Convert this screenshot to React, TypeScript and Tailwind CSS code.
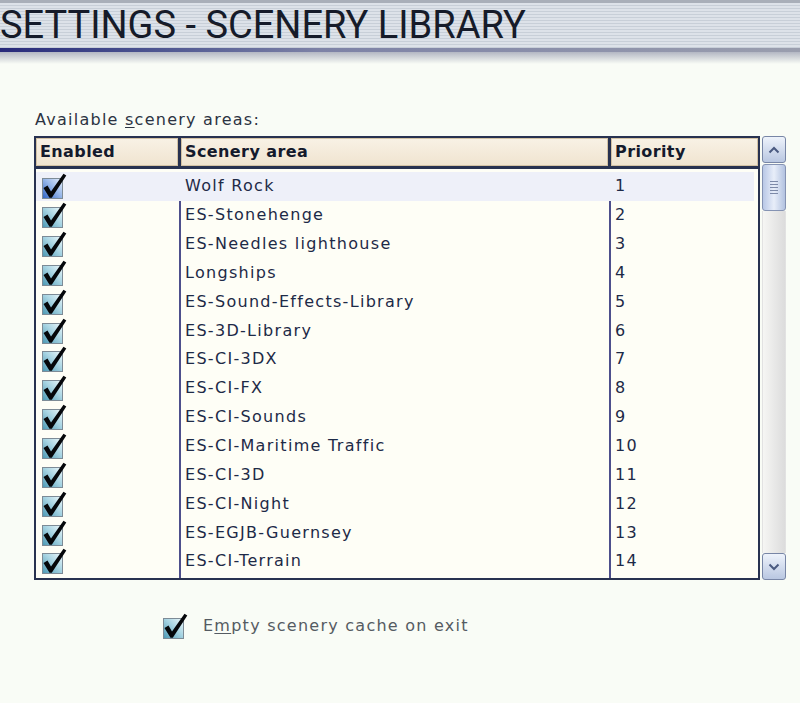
import React from "react";

const areas = [
  "Wolf Rock",
  "ES-Stonehenge",
  "ES-Needles lighthouse",
  "Longships",
  "ES-Sound-Effects-Library",
  "ES-3D-Library",
  "ES-CI-3DX",
  "ES-CI-FX",
  "ES-CI-Sounds",
  "ES-CI-Maritime Traffic",
  "ES-CI-3D",
  "ES-CI-Night",
  "ES-EGJB-Guernsey",
  "ES-CI-Terrain",
];

// ticked box, drawn the way the old skin draws it
const Tick = ({ id, blue }: { id: string; blue?: boolean }) => (
  <svg width="26" height="26" viewBox="0 0 26 26">
    <defs>
      <linearGradient id={id} x1="0" y1="1" x2="1" y2="0">
        <stop offset="0" stopColor={blue ? "#2f63c4" : "#4a97b3"} />
        <stop offset="0.55" stopColor={blue ? "#9ab9ea" : "#a9d5e3"} />
        <stop offset="1" stopColor={blue ? "#e8f0fb" : "#f0f9fb"} />
      </linearGradient>
    </defs>
    <rect x="1.5" y="5.5" width="20" height="20" fill={`url(#${id})`} stroke="#7d8b96" />
    <path d="M2.5 15 L6.5 12.5 L10 18.5 L22.5 0.8 L25.3 2.5 L10.8 24.8 L8.5 24.8 Z" fill="#05070a" />
  </svg>
);

export default function App() {
  return (
    <div className="w-[800px] h-[703px] overflow-hidden bg-[#f9fcf6] font-['DejaVu_Sans',sans-serif]">
      <div className="h-[48px] overflow-hidden border-t-[3px] border-[#a9afb9] bg-[repeating-linear-gradient(180deg,#dde2e9_0px,#dde2e9_2px,#c8cfd8_2px,#c8cfd8_3px)]">
        <h1 className="whitespace-nowrap font-['Roboto',sans-serif] text-[38px] leading-[44px] text-[#161b29]">
          SETTINGS - SCENERY LIBRARY
        </h1>
      </div>
      <div className="h-[4px] bg-linear-to-r from-[#28297a] via-[#7d82a6] via-40% to-[#9a9eae]" />
      <div className="h-[12px] bg-linear-to-b from-[#b3b7c3] to-[#f9fcf6]" />

      <div className="ml-[35px] mt-[46px] text-[16px] leading-[20px] tracking-[1.25px] text-[#2c3342]">
        Available <span className="underline underline-offset-2">s</span>cenery areas:
      </div>

      <div className="ml-[34px] mt-[6px] flex">
        <div className="flex h-[444px] w-[726px] flex-col border-2 border-[#283250] bg-[#fefef6]">
          <div className="flex h-[31px] border-b-[3px] border-[#283250] text-[16px] font-bold tracking-[0.4px] text-[#141a2c]">
            <div className="w-[145px] border-r-[3px] border-[#283250]">
              <div className="flex h-full items-center border border-[#d3c2a4] bg-linear-to-b from-[#f8f1e5] to-[#f0e4d0] pl-[3px]">
                Enabled
              </div>
            </div>
            <div className="w-[430px] border-r-[3px] border-[#283250]">
              <div className="flex h-full items-center border border-[#d3c2a4] bg-linear-to-b from-[#f8f1e5] to-[#f0e4d0] pl-[3px]">
                Scenery area
              </div>
            </div>
            <div className="flex-1">
              <div className="flex h-full items-center border border-[#d3c2a4] bg-linear-to-b from-[#f8f1e5] to-[#f0e4d0] pl-[3px]">
                Priority
              </div>
            </div>
          </div>

          <div className="flex flex-1 flex-col pt-[3px] text-[16px] tracking-[1.3px] text-[#1d2a47]">
            {areas.map((name, i) => {
              const sel = i === 0;
              return (
                <div
                  key={name}
                  className={`flex h-[28.85px] items-center ${sel ? "mr-[4px] bg-[#eef0f9]" : ""}`}
                >
                  <div
                    className={`flex h-full w-[145px] items-center pl-[5px] border-r-2 ${sel ? "border-transparent" : "border-[#4d4f8c]"}`}
                  >
                    <Tick id={`t${i}`} blue={sel} />
                  </div>
                  <div
                    className={`flex h-full w-[430px] items-center pl-[4px] border-r-2 ${sel ? "border-transparent" : "border-[#4d4f8c]"}`}
                  >
                    {name}
                  </div>
                  <div className="flex h-full flex-1 items-center pl-[4px]">{i + 1}</div>
                </div>
              );
            })}
            <div className="flex flex-1">
              <div className="w-[145px] border-r-2 border-[#4d4f8c]" />
              <div className="w-[430px] border-r-2 border-[#4d4f8c]" />
            </div>
          </div>
        </div>

        <div className="ml-[2px] flex h-[444px] w-[24px] flex-col">
          <div className="flex h-[27px] items-center justify-center rounded-[3px] border border-[#7886a6] bg-linear-to-b from-[#eef3fb] to-[#b9c7e1]">
            <svg width="12" height="8" viewBox="0 0 12 8">
              <path d="M1.5 6.5 L6 2 L10.5 6.5" stroke="#4a5a80" strokeWidth="2" fill="none" />
            </svg>
          </div>
          <div className="mt-[1px] flex h-[47px] flex-col items-center justify-center gap-[2px] rounded-[3px] border border-[#8593b3] bg-linear-to-r from-[#b9c8e6] via-[#e8eef9] to-[#b2c2e0]">
            {[0, 1, 2, 3, 4].map((k) => (
              <div key={k} className="h-[1px] w-[8px] bg-[#7d8aa8]" />
            ))}
          </div>
          <div className="flex-1 border-x border-[#e2e2e2] bg-linear-to-r from-[#f6f6f4] to-[#dcdcdc]" />
          <div className="flex h-[27px] items-center justify-center rounded-[3px] border border-[#7886a6] bg-linear-to-b from-[#eef3fb] to-[#b9c7e1]">
            <svg width="12" height="8" viewBox="0 0 12 8">
              <path d="M1.5 1.5 L6 6 L10.5 1.5" stroke="#4a5a80" strokeWidth="2" fill="none" />
            </svg>
          </div>
        </div>
      </div>

      <div className="ml-[162px] mt-[33px] flex h-[26px] items-center">
        <Tick id="cache" />
        <span className="ml-[15px] text-[16px] tracking-[1.25px] text-[#555b62]">
          E<span className="underline underline-offset-2">m</span>pty scenery cache on exit
        </span>
      </div>
    </div>
  );
}
